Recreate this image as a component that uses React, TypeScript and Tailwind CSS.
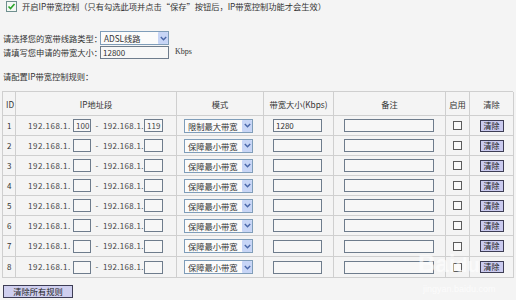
import React from "react";

const F = "font-['Noto_Sans_CJK_SC','Noto_Sans',sans-serif]";

function Chevron() {
  return (
    <svg width="7" height="5" viewBox="0 0 7 5">
      <path d="M0.8 1 L3.5 3.8 L6.2 1" fill="none" stroke="#4a67a8" strokeWidth="1.4" />
    </svg>
  );
}

function FakeSelect({ text }: { text: string }) {
  return (
    <div className="flex items-center w-[69px] h-[14px] border border-[#7f9db9] bg-[#fbfbfb]">
      <span className="flex-1 pl-[3px] text-[8.25px] leading-[12px] whitespace-nowrap">{text}</span>
      <span className="w-[10px] h-[12px] rounded-[1px] bg-[#c7d5f6] flex items-center justify-center">
        <Chevron />
      </span>
    </div>
  );
}

function Box({ w, value }: { w: string; value?: string }) {
  return (
    <div className={`${w} h-[13px] border border-[#6e7c8c] bg-[#f7f7f7] flex items-center pl-[2px] text-[8px] leading-[11px]`}>
      {value}
    </div>
  );
}

function ClearBtn() {
  return (
    <div className="w-[24px] h-[12px] border border-[#3d3d55] bg-[#cbcbef] flex items-center justify-center text-[8px] leading-[10px] text-[#222]">
      清除
    </div>
  );
}

const rows = [
  { id: 1, a: "100", b: "119", mode: "限制最大带宽", bw: "1280" },
  { id: 2, a: "", b: "", mode: "保障最小带宽", bw: "" },
  { id: 3, a: "", b: "", mode: "保障最小带宽", bw: "" },
  { id: 4, a: "", b: "", mode: "保障最小带宽", bw: "" },
  { id: 5, a: "", b: "", mode: "保障最小带宽", bw: "" },
  { id: 6, a: "", b: "", mode: "保障最小带宽", bw: "" },
  { id: 7, a: "", b: "", mode: "保障最小带宽", bw: "" },
  { id: 8, a: "", b: "", mode: "保障最小带宽", bw: "" },
];

const cell = "border-r border-b border-[#cfcfcf] flex items-center";

export default function App() {
  return (
    <div className={`relative w-[516px] h-[300px] overflow-hidden bg-[#f4f4f4] text-[#333] ${F}`}>
      {/* enable line */}
      <div className="flex items-center h-[12px]">
        <svg className="ml-[6px]" width="11" height="11" viewBox="0 0 11 11">
          <rect x="0.5" y="0.5" width="10" height="10" fill="#f4f8f4" stroke="#6f8f8f" />
          <path d="M2.5 5.5 L4.5 7.6 L8.5 3" fill="none" stroke="#2aa52a" strokeWidth="1.6" />
        </svg>
        <span className="ml-[5px] text-[8.25px] leading-[12px] whitespace-nowrap">
          开启IP带宽控制（只有勾选此项并点击“保存”按钮后，IP带宽控制功能才会生效）
        </span>
      </div>

      {/* line type */}
      <div className="mt-[19px] flex items-center h-[14px]">
        <span className="w-[100px] pl-[3px] text-[8.25px] leading-[12px] whitespace-nowrap">请选择您的宽带线路类型：</span>
        <FakeSelect text="ADSL线路" />
      </div>
      <div className="flex items-center h-[14px]">
        <span className="w-[100px] pl-[3px] text-[8.25px] leading-[12px] whitespace-nowrap">请填写您申请的带宽大小：</span>
        <Box w="w-[69px]" value="12800" />
        <span className="ml-[6px] text-[8px] leading-[10px] font-['Liberation_Serif',serif]">Kbps</span>
      </div>

      <div className="mt-[11px] h-[12px] flex items-center pl-[3px] text-[8.25px] leading-[12px]">
        请配置IP带宽控制规则：
      </div>

      {/* table */}
      <div className="mt-[9px] ml-[2px] w-[511px] border-l border-t border-[#cfcfcf] grid grid-cols-[13px_161px_87px_70px_112px_24px_44px] text-[8.25px] leading-[12px]">
        <div className={`${cell} h-[24px] pl-[3px]`}>ID</div>
        <div className={`${cell} h-[24px] justify-center`}>IP地址段</div>
        <div className={`${cell} h-[24px] justify-center`}>模式</div>
        <div className={`${cell} h-[24px] justify-center whitespace-nowrap`}>带宽大小(Kbps)</div>
        <div className={`${cell} h-[24px] justify-center`}>备注</div>
        <div className={`${cell} h-[24px] justify-center`}>启用</div>
        <div className={`${cell} h-[24px] justify-center`}>清除</div>
        {rows.map((r) => {
          const h = r.id >= 7 ? "h-[21px]" : "h-[20px]";
          return (
            <React.Fragment key={r.id}>
              <div className={`${cell} ${h} pl-[4px] text-[8px]`}>{r.id}</div>
              <div className={`${cell} ${h} pl-[12px] text-[8px] whitespace-nowrap text-[#444]`}>
                <span className="w-[45px] tracking-[0.5px]">192.168.1.</span>
                <Box w="w-[18px]" value={r.a} />
                <span className="w-[12px] text-center">-</span>
                <span className="w-[41px] tracking-[0.3px]">192.168.1.</span>
                <Box w="w-[19px]" value={r.b} />
              </div>
              <div className={`${cell} ${h} pl-[7px]`}>
                <FakeSelect text={r.mode} />
              </div>
              <div className={`${cell} ${h} pl-[9px]`}>
                <Box w="w-[49px]" value={r.bw} />
              </div>
              <div className={`${cell} ${h} pl-[10px]`}>
                <Box w="w-[90px]" />
              </div>
              <div className={`${cell} ${h} justify-center`}>
                <div className="w-[9px] h-[9px] border border-[#5c5c5c] bg-[#fafafa]" />
              </div>
              <div className={`${cell} ${h} justify-center`}>
                <ClearBtn />
              </div>
            </React.Fragment>
          );
        })}
      </div>

      <div className="mt-[7px] ml-[3px] w-[70px] h-[13px] border border-[#3d3d55] bg-[#cfcfef] flex items-center justify-center text-[8.25px] leading-[11px] text-[#222]">
        清除所有规则
      </div>

      {/* watermark */}
      <div className="absolute left-[418px] top-[252px] text-white/60 font-['Liberation_Sans',sans-serif] font-bold text-[24px] leading-none pointer-events-none">
        Bai<span className="text-[20px]">du</span>
      </div>
      <div className="absolute left-[423px] top-[285px] text-white/70 font-['Liberation_Sans',sans-serif] text-[9px] leading-none pointer-events-none">
        jingyan.baidu.com
      </div>
    </div>
  );
}
